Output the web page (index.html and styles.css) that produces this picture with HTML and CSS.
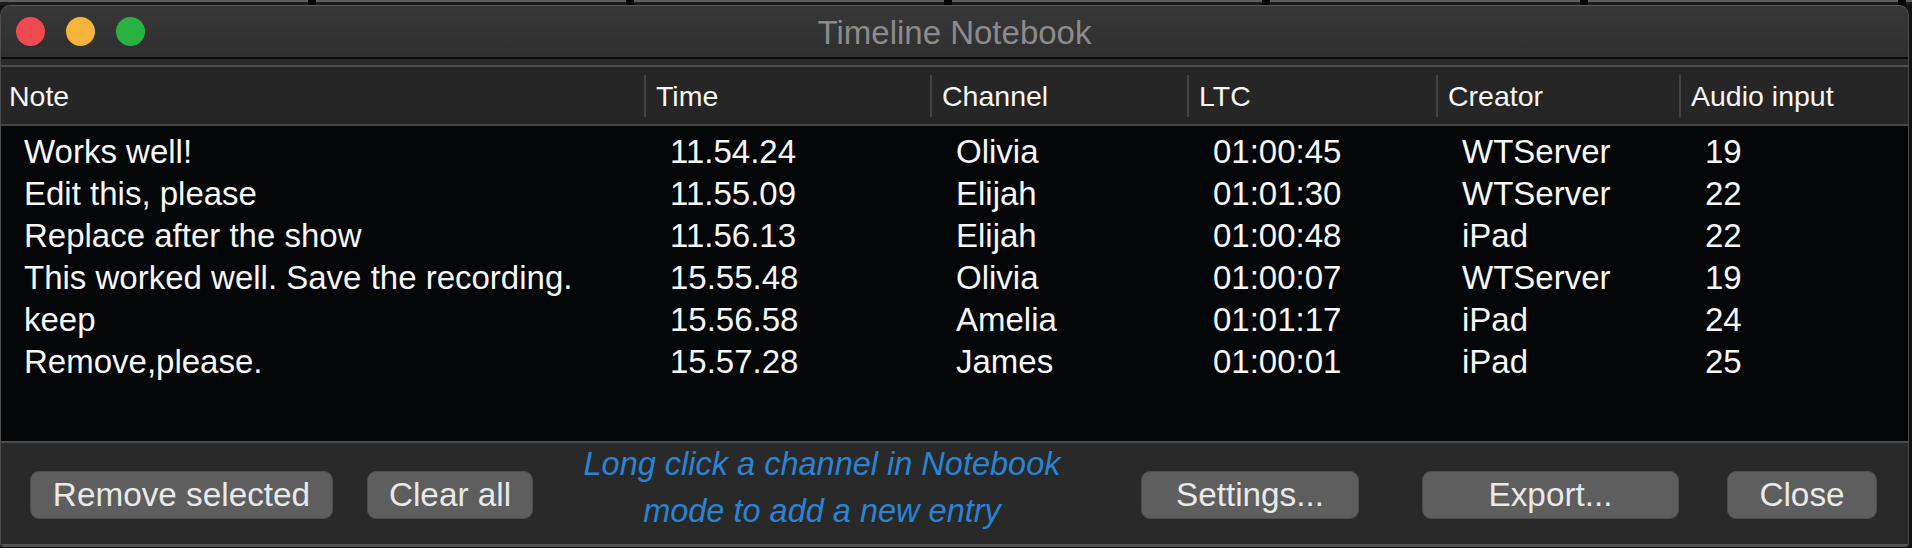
FILE: index.html
```html
<!DOCTYPE html>
<html lang="en">
<head>
<meta charset="utf-8">
<title>Timeline Notebook</title>
<link rel="stylesheet" href="styles.css">
</head>
<body>
<div class="strip"></div>
<div class="window">
  <div class="titlebar">
    <div class="lights">
      <span class="light red"></span>
      <span class="light yellow"></span>
      <span class="light green"></span>
    </div>
    <div class="title">Timeline Notebook</div>
    <div></div>
  </div>
  <div class="band"></div>
  <div class="thead grid">
    <div class="th first">Note</div>
    <div class="th">Time</div>
    <div class="th">Channel</div>
    <div class="th">LTC</div>
    <div class="th">Creator</div>
    <div class="th">Audio input</div>
  </div>
  <div class="tbody">
    <div class="row grid"><div class="td first">Works well!</div><div class="td">11.54.24</div><div class="td">Olivia</div><div class="td">01:00:45</div><div class="td">WTServer</div><div class="td">19</div></div>
    <div class="row grid"><div class="td first">Edit this, please</div><div class="td">11.55.09</div><div class="td">Elijah</div><div class="td">01:01:30</div><div class="td">WTServer</div><div class="td">22</div></div>
    <div class="row grid"><div class="td first">Replace after the show</div><div class="td">11.56.13</div><div class="td">Elijah</div><div class="td">01:00:48</div><div class="td">iPad</div><div class="td">22</div></div>
    <div class="row grid"><div class="td first">This worked well. Save the recording.</div><div class="td">15.55.48</div><div class="td">Olivia</div><div class="td">01:00:07</div><div class="td">WTServer</div><div class="td">19</div></div>
    <div class="row grid"><div class="td first">keep</div><div class="td">15.56.58</div><div class="td">Amelia</div><div class="td">01:01:17</div><div class="td">iPad</div><div class="td">24</div></div>
    <div class="row grid"><div class="td first">Remove,please.</div><div class="td">15.57.28</div><div class="td">James</div><div class="td">01:00:01</div><div class="td">iPad</div><div class="td">25</div></div>
  </div>
  <div class="bar">
    <button class="btn btn-remove">Remove selected</button>
    <button class="btn btn-clear">Clear all</button>
    <div class="hint">Long click a channel in Notebook<br>mode to add a new entry</div>
    <button class="btn btn-settings">Settings...</button>
    <button class="btn btn-export">Export...</button>
    <button class="btn btn-close">Close</button>
  </div>
</div>
</body>
</html>
```

FILE: styles.css
```css
html, body {
  margin: 0;
  padding: 0;
}
body {
  width: 1912px;
  height: 548px;
  overflow: hidden;
  background: #121212;
  font-family: "Liberation Sans", Arial, sans-serif;
  color: #f2f2f2;
}
.strip {
  height: 5px;
  background:
    repeating-linear-gradient(90deg, transparent 0 308px, #050505 308px 316px, transparent 316px 318px),
    linear-gradient(#5e5e5e 0 2px, #1c1c1c 2px 5px);
}
.window {
  width: 1907px;
  border: 1px solid #4d4d4d;
  border-top-color: #5a5a5a;
  border-radius: 10px 10px 4px 4px;
  overflow: hidden;
  background: #292929;
}
.titlebar {
  height: 51px;
  display: grid;
  grid-template-columns: 1fr auto 1fr;
  align-items: center;
  background: linear-gradient(#383838, #2f2f2f);
  border-bottom: 2px solid #0d0d0d;
}
.lights {
  display: flex;
  gap: 21px;
  padding-left: 15px;
}
.light {
  width: 29px;
  height: 29px;
  border-radius: 50%;
  display: block;
}
.red { background: #ee4a50; }
.yellow { background: #f8b43a; }
.green { background: #29b242; }
.title {
  font-size: 33px;
  color: #8b8b8b;
  padding-top: 2px;
}
.band {
  height: 6px;
  background: #2a2a2a;
  border-bottom: 2px solid #4e4e4e;
}
.grid {
  display: grid;
  grid-template-columns: 643px 286px 257px 249px 243px 1fr;
}
.thead {
  height: 57px;
  align-items: center;
  background: #262626;
  border-bottom: 2px solid #474747;
}
.th {
  height: 42px;
  line-height: 42px;
  font-size: 28.5px;
  color: #f6f6f6;
  border-left: 2px solid #434343;
  padding-left: 10px;
  white-space: nowrap;
}
.th.first {
  border-left: none;
  padding-left: 8px;
}
.tbody {
  height: 310px;
  padding-top: 5px;
  background: #040608;
}
.row {
  height: 42px;
}
.td {
  font-size: 33px;
  line-height: 42px;
  color: #f7f7f7;
  padding-left: 26px;
  white-space: nowrap;
}
.td.first {
  padding-left: 23px;
}
.bar {
  height: 101px;
  border-top: 2px solid #4b4b4b;
  border-bottom: 2px solid #555555;
  background: #292929;
  display: flex;
  align-items: flex-start;
  padding-left: 29px;
}
.btn {
  margin-top: 28px;
  height: 48px;
  padding: 0;
  border: 1px solid #4c4c4c;
  border-radius: 9px;
  background: #5e5e5e;
  color: #e9e9e9;
  font-family: "Liberation Sans", Arial, sans-serif;
  font-size: 33.3px;
  line-height: 46px;
  text-align: center;
  white-space: nowrap;
}
.btn-remove { width: 303px; }
.btn-clear { width: 166px; margin-left: 34px; }
.hint {
  width: 578px;
  margin-top: -2px;
  text-align: center;
  font-style: italic;
  font-size: 32.5px;
  line-height: 47px;
  color: #2a84d4;
  white-space: nowrap;
}
.btn-settings { width: 218px; margin-left: 30px; }
.btn-export { width: 257px; margin-left: 63px; }
.btn-close { width: 150px; margin-left: 48px; }
```
